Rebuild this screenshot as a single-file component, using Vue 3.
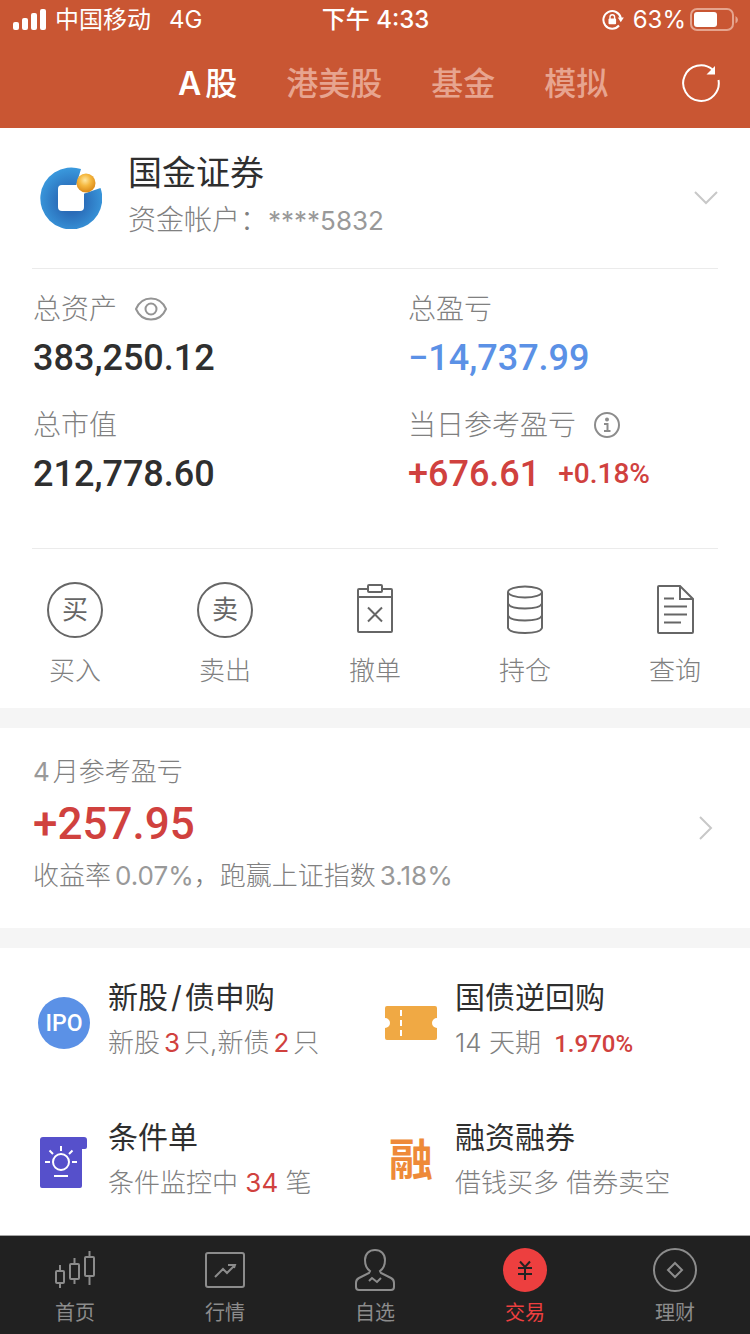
<script setup>
import { ref } from 'vue'

const markets = [
  { id: 'a', prefix: 'A', label: '股' },
  { id: 'hkus', label: '港美股' },
  { id: 'fund', label: '基金' },
  { id: 'demo', label: '模拟' }
]
const activeMarket = ref('a')

const tools = [
  { id: 'buy', label: '买入' },
  { id: 'sell', label: '卖出' },
  { id: 'cancel', label: '撤单' },
  { id: 'hold', label: '持仓' },
  { id: 'query', label: '查询' }
]

const tabs = [
  { id: 'home', label: '首页' },
  { id: 'quotes', label: '行情' },
  { id: 'watch', label: '自选' },
  { id: 'trade', label: '交易' },
  { id: 'wealth', label: '理财' }
]
const activeTab = ref('trade')
</script>

<template>
  <div class="page">
    <header class="top">
      <div class="status">
        <div class="status-side">
          <svg class="signal" width="34" height="22" viewBox="0 0 34 22" fill="#fff" aria-hidden="true">
            <rect x="0" y="13" width="6" height="8" rx="2" />
            <rect x="9" y="9" width="6" height="12" rx="2" />
            <rect x="18" y="4" width="6" height="17" rx="2" />
            <rect x="27" y="0" width="6" height="21" rx="2" />
          </svg>
          <span class="carrier">中国移动</span>
          <span>4G</span>
        </div>
        <div class="clock">下午 4:33</div>
        <div class="status-side right">
          <svg width="22" height="22" viewBox="0 0 22 22" fill="none" stroke="#fff" stroke-width="2" aria-hidden="true">
            <path d="M17 16.5A8.8 8.8 0 1 1 18.8 9" />
            <path d="M15.8 8.6h6l-3 4.6z" fill="#fff" stroke="none" />
            <rect x="6.5" y="9.4" width="7.6" height="5.8" rx="1" fill="#fff" stroke="none" />
            <path d="M8 10V8a2.3 2.3 0 0 1 4.6 0v2" stroke-width="1.4" />
          </svg>
          <span class="percent">63%</span>
          <svg width="48" height="24" viewBox="0 0 48 24" fill="none" aria-hidden="true">
            <rect x="1" y="1" width="42" height="21" rx="6" stroke="#e5a48e" stroke-width="2" />
            <rect x="4" y="4" width="23" height="15" rx="3" fill="#fff" />
            <path d="M45.500 8v7.500q2.500-1.500 2.500-3.750t-2.500-3.750z" fill="#e5a48e" />
          </svg>
        </div>
      </div>
      <div class="market-bar">
        <nav class="markets">
          <button
            v-for="m in markets"
            :key="m.id"
            type="button"
            :class="{ on: m.id === activeMarket }"
            @click="activeMarket = m.id"
          ><span v-if="m.prefix" class="prefix">{{ m.prefix }}</span>{{ m.label }}</button>
        </nav>
        <button class="refresh" type="button" aria-label="刷新">
          <svg width="40" height="40" viewBox="0 0 40 40" fill="none" stroke="#fff" stroke-width="2">
            <path d="M37.500 16A17.800 17.800 0 1 1 31.500 5.600" />
            <path d="M34 2v8.500h-8.500z" fill="#fff" stroke="none" />
          </svg>
        </button>
      </div>
    </header>

    <main>
      <section class="panel">
        <button class="broker" type="button">
          <svg class="logo" width="62" height="62" viewBox="0 0 62 62" aria-hidden="true">
            <defs>
              <radialGradient id="ring" cx="50%" cy="55%" r="55%">
                <stop offset="0.35" stop-color="#2a6cb8" />
                <stop offset="1" stop-color="#3a9ade" />
              </radialGradient>
              <radialGradient id="pearl" cx="45%" cy="35%" r="60%">
                <stop offset="0" stop-color="#ffe7a0" />
                <stop offset="0.5" stop-color="#f5b840" />
                <stop offset="1" stop-color="#de8f1d" />
              </radialGradient>
            </defs>
            <path d="M41 2A31 31 0 1 0 60.500 21L43 27L36 19z" fill="url(#ring)" />
            <rect x="18" y="18" width="26" height="26" rx="4" fill="#fff" />
            <circle cx="46" cy="16" r="9.500" fill="url(#pearl)" />
          </svg>
          <span class="broker-text">
            <span class="broker-name">国金证券</span>
            <span class="account">资金帐户：<span class="digits">****5832</span></span>
          </span>
          <svg width="24" height="14" viewBox="0 0 24 14" fill="none" stroke="#c8c8c8" stroke-width="2" aria-hidden="true">
            <path d="M1 1l11 11L23 1" />
          </svg>
        </button>

        <dl class="stats">
          <div class="stat">
            <dt>
              总资产
              <svg width="32" height="24" viewBox="0 0 32 24" fill="none" stroke="#949494" stroke-width="2" aria-hidden="true">
                <path d="M1 12C4 5 10 1.500 16 1.500S28 5 31 12C28 19 22 22.500 16 22.500S4 19 1 12z" />
                <circle cx="16" cy="12" r="5.500" />
              </svg>
            </dt>
            <dd>383,250.12</dd>
          </div>
          <div class="stat">
            <dt>总盈亏</dt>
            <dd class="down">−14,737.99</dd>
          </div>
          <div class="stat">
            <dt>总市值</dt>
            <dd>212,778.60</dd>
          </div>
          <div class="stat">
            <dt>
              当日参考盈亏
              <svg width="26" height="26" viewBox="0 0 26 26" fill="none" stroke="#8c8c8c" stroke-width="2" aria-hidden="true">
                <circle cx="13" cy="13" r="12" />
                <circle cx="13" cy="7.500" r="2" fill="#8c8c8c" stroke="none" />
                <path d="M10 12h3.500v7M10 19h6.500" />
              </svg>
            </dt>
            <dd class="up">+676.61<small>+0.18%</small></dd>
          </div>
        </dl>

        <div class="tools">
          <button v-for="t in tools" :key="t.id" type="button">
            <svg width="58" height="58" viewBox="0 0 58 58" fill="none" stroke="#666" stroke-width="2" aria-hidden="true">
              <template v-if="t.id === 'buy' || t.id === 'sell'">
                <circle cx="29" cy="29" r="27" />
                <text class="seal" x="29" y="38" text-anchor="middle">{{ t.id === 'buy' ? '买' : '卖' }}</text>
              </template>
              <template v-else-if="t.id === 'cancel'">
                <path d="M22 8h-9q-1 0-1 1v41q0 1 1 1h32q1 0 1-1V9q0-1-1-1h-9M12 16h34" />
                <rect x="22" y="4" width="14" height="7" rx="1" />
                <path d="M22 26.500l14 14M36 26.500l-14 14" />
              </template>
              <template v-else-if="t.id === 'hold'">
                <ellipse cx="29" cy="11" rx="17" ry="5.500" />
                <path d="M12 11v36q2 5 17 5t17-5V11M12 22.500q2 5 17 5t17-5M12 34.500q2 5 17 5t17-5" />
              </template>
              <template v-else>
                <path d="M34 5H13q-1 0-1 1v45q0 1 1 1h33q1 0 1-1V18zM34 5v13h13" />
                <path d="M18 17.500h10M18 25.500h23M18 33.500h23M18 41.500h17" />
              </template>
            </svg>
            <span>{{ t.label }}</span>
          </button>
        </div>
      </section>

      <section class="panel">
        <button class="month" type="button">
          <span class="month-text">
            <span class="note"><span class="digits lead">4</span>月参考盈亏</span>
            <span class="month-value">+257.95</span>
            <span class="note">收益率<span class="digits trail">0.07%</span>，跑赢上证指数<span class="digits trail">3.18%</span></span>
          </span>
          <svg width="14" height="24" viewBox="0 0 14 24" fill="none" stroke="#c8c8c8" stroke-width="2" aria-hidden="true">
            <path d="M1 1l11 11L1 23" />
          </svg>
        </button>
      </section>

      <section class="panel features">
        <a class="feature" href="#ipo">
          <svg width="52" height="58" viewBox="0 0 52 58" aria-hidden="true">
            <circle cx="26" cy="32" r="26" fill="#5b91e6" />
            <text class="ipo" x="26" y="40" text-anchor="middle">IPO</text>
          </svg>
          <span class="feature-text">
            <span class="title">新股<span class="slash">/</span>债申购</span>
            <span class="sub">新股<b class="count">3</b>只,新债<b class="count">2</b>只</span>
          </span>
        </a>
        <a class="feature" href="#repo">
          <svg width="52" height="58" viewBox="0 0 52 58" aria-hidden="true">
            <path d="M2 15h48q2 0 2 2v10a5 5 0 0 0 0 10v10q0 2-2 2H2q-2 0-2-2V37a5 5 0 0 0 0-10V17q0-2 2-2z" fill="#f0a944" />
            <path d="M16 19v6M16 29v6M16 39v6" stroke="#fff" stroke-width="2" />
          </svg>
          <span class="feature-text">
            <span class="title">国债逆回购</span>
            <span class="sub">14 天期 <strong>1.970%</strong></span>
          </span>
        </a>
        <a class="feature" href="#conditional">
          <svg width="52" height="58" viewBox="0 0 52 58" aria-hidden="true">
            <path d="M5 6h41q3 0 3 3v7q0 2-2 2h-3v37q0 2-2 2H4q-2 0-2-2V9q0-3 3-3z" fill="#5650cb" />
            <g fill="none" stroke="#fff" stroke-width="2">
              <circle cx="23" cy="31" r="8" />
              <path d="M16 45h14M23 15v5M7 31h5M34 31h5M11.500 19.500l3.500 3.500M34.500 19.500L31 23" />
            </g>
          </svg>
          <span class="feature-text">
            <span class="title">条件单</span>
            <span class="sub">条件监控中 <b>34</b> 笔</span>
          </span>
        </a>
        <a class="feature" href="#margin">
          <span class="rong" aria-hidden="true">融</span>
          <span class="feature-text">
            <span class="title">融资融券</span>
            <span class="sub">借钱买多 借券卖空</span>
          </span>
        </a>
      </section>
    </main>

    <nav class="tabbar">
      <button
        v-for="t in tabs"
        :key="t.id"
        type="button"
        :class="{ on: t.id === activeTab }"
        @click="activeTab = t.id"
      >
        <svg width="46" height="46" viewBox="0 0 46 46" fill="none" stroke="#8c8c8c" stroke-width="2" aria-hidden="true">
          <template v-if="t.id === 'home'">
            <rect x="4" y="24" width="8" height="12" rx="1" />
            <rect x="18" y="17" width="9" height="15" rx="1" />
            <rect x="33" y="10" width="9" height="19" rx="1" />
            <path d="M8 18v6M8 36v5M22.500 11v6M22.500 32v5M37.500 4v6M37.500 29v9" />
          </template>
          <template v-else-if="t.id === 'quotes'">
            <rect x="4" y="6" width="38" height="34" rx="2" />
            <path d="M13 30l8-8 4 4 7-7M26 18h7l-1 3" />
          </template>
          <template v-else-if="t.id === 'watch'">
            <path d="M23 3c-6 0-10 4-10 10 0 5 2 9 5 11l-1 2-10 5q-3 1.500-3 5v4q0 3 3 3h32q3 0 3-3v-4q0-3.500-3-5l-10-5-1-2c3-2 5-6 5-11 0-6-4-10-10-10z" />
            <path d="M17 34l3-3 5 4 4-4" />
          </template>
          <template v-else-if="t.id === 'trade'">
            <circle cx="23" cy="23" r="22" fill="#ed3f3f" stroke="none" />
            <path d="M18 14.500l5 5.500 5-5.500M16 21h14M16 27h14M23 20v13" stroke="#222" />
          </template>
          <template v-else>
            <circle cx="23" cy="23" r="21" />
            <path d="M23 16l7 7-7 7-7-7z" />
          </template>
        </svg>
        <span>{{ t.label }}</span>
      </button>
    </nav>
  </div>
</template>

<style>
body {
  margin: 0;
  background: #f5f5f5;
}
</style>

<style scoped>
.page {
  min-height: 100vh;
  display: flex;
  flex-direction: column;
  background: #f5f5f5;
  color: #2f2f2f;
  font-family: Inter, "Noto Sans CJK SC", sans-serif;
}
button {
  margin: 0;
  padding: 0;
  border: 0;
  background: none;
  color: inherit;
  font: inherit;
  text-align: left;
  cursor: pointer;
}
a {
  color: inherit;
  text-decoration: none;
}
svg {
  display: block;
  flex: none;
}
main {
  flex: 1;
  display: flex;
  flex-direction: column;
  gap: 20px;
}
.top {
  background: #c95633;
  color: #fff;
}
.status {
  display: grid;
  grid-template-columns: 1fr auto 1fr;
  align-items: center;
  height: 40px;
  padding: 0 12px 0 13px;
  font-size: 24px;
  line-height: 36px;
}
.status-side {
  display: flex;
  align-items: center;
}
.right {
  justify-content: flex-end;
}
.carrier {
  margin: 0 18px 0 8px;
}
.percent {
  margin: 0 4px 0 9px;
}
.clock {
  font-weight: 500;
}
.market-bar {
  display: flex;
  align-items: center;
  justify-content: space-between;
  height: 88px;
  padding: 0 29px 0 178px;
}
.markets {
  display: flex;
  gap: 49px;
}
.markets button {
  font-size: 32px;
  line-height: 44px;
  font-weight: 500;
  color: #e7a48f;
}
.markets .on {
  color: #fff;
}
.prefix {
  margin-right: 4px;
  font-weight: 600;
}
.panel {
  background: #fff;
}
.broker {
  display: flex;
  align-items: center;
  width: calc(100% - 64px);
  height: 141px;
  margin: 0 32px;
  padding: 0 0 0 8px;
  border-bottom: 1px solid #ebebeb;
}
.broker-text {
  flex: 1;
  display: flex;
  flex-direction: column;
  padding-bottom: 4px;
  margin-left: 26px;
}
.broker-name {
  font-size: 34px;
  line-height: 48px;
}
.account {
  font-size: 28px;
  line-height: 46px;
  font-weight: 300;
  color: #808080;
}
.digits {
  font-size: 26px;
  font-weight: 400;
  color: #999;
}
.lead {
  margin-right: 3px;
}
.trail {
  margin-left: 4px;
}
.stats {
  display: grid;
  grid-template-columns: 1fr 1fr;
  margin: 0;
  padding: 17px 0 30px;
}
.stat {
  height: 116px;
  padding-left: 33px;
}
dt {
  display: flex;
  align-items: center;
  gap: 18px;
  font-size: 28px;
  line-height: 46px;
  font-weight: 300;
  color: #808080;
}
dd {
  display: flex;
  align-items: center;
  margin: 0;
  font-family: Roboto, "Liberation Sans", sans-serif;
  font-size: 36px;
  line-height: 52px;
  font-weight: 500;
}
dd small {
  margin-left: 18px;
  font-size: 28px;
}
.down {
  color: #5b91e6;
}
.up,
.month-value {
  color: #d0413e;
}
.tools {
  display: grid;
  grid-template-columns: repeat(5, 1fr);
  position: relative;
  padding: 33px 0 17px;
}
.tools::before {
  content: "";
  position: absolute;
  top: 0;
  left: 32px;
  right: 32px;
  height: 1px;
  background: #ebebeb;
}
.tools button {
  display: flex;
  flex-direction: column;
  align-items: center;
  gap: 12px;
  font-size: 26px;
  line-height: 40px;
  font-weight: 300;
  color: #808080;
}
.seal {
  fill: #666;
  stroke: none;
  font-size: 26px;
  font-weight: 400;
}
.month {
  display: flex;
  align-items: center;
  justify-content: space-between;
  width: 100%;
  height: 200px;
  padding: 0 37px 0 33px;
}
.month-text {
  display: flex;
  flex-direction: column;
  padding-bottom: 8px;
}
.note {
  font-size: 26px;
  line-height: 48px;
  font-weight: 300;
  color: #808080;
}
.month-value {
  font-family: Roboto, "Liberation Sans", sans-serif;
  font-size: 44px;
  line-height: 56px;
  font-weight: 500;
}
.features {
  display: grid;
  grid-template-columns: 1fr 1fr;
  padding: 2px 18px 5px 38px;
}
.feature {
  display: flex;
  align-items: center;
  gap: 18px;
  height: 140px;
}
.feature-text {
  display: flex;
  flex-direction: column;
}
.title {
  font-size: 30px;
  line-height: 46px;
}
.slash {
  margin: 0 3px;
}
.sub {
  font-size: 26px;
  line-height: 46px;
  font-weight: 300;
  color: #808080;
}
.sub b {
  font-weight: 400;
  color: #d0413e;
}
.sub .count {
  margin: 0 4px;
}
.sub strong {
  margin-left: 6px;
  font-family: Roboto, "Liberation Sans", sans-serif;
  font-size: 24px;
  font-weight: 500;
  color: #d0413e;
}
.ipo {
  fill: #fff;
  font-family: Roboto, sans-serif;
  font-size: 23px;
  font-weight: 500;
}
.rong {
  width: 52px;
  color: #ee8a38;
  font-size: 44px;
  line-height: 64px;
  font-weight: 700;
  text-align: center;
}
.tabbar {
  display: grid;
  grid-template-columns: repeat(5, 1fr);
  border-top: 1px solid #a5a5a5;
  background: #212121;
  padding: 11px 0 6px;
}
.tabbar button {
  display: flex;
  flex-direction: column;
  align-items: center;
  gap: 5px;
  font-size: 20px;
  line-height: 30px;
  color: #8c8c8c;
}
.tabbar .on {
  color: #ed3f3f;
}
</style>
